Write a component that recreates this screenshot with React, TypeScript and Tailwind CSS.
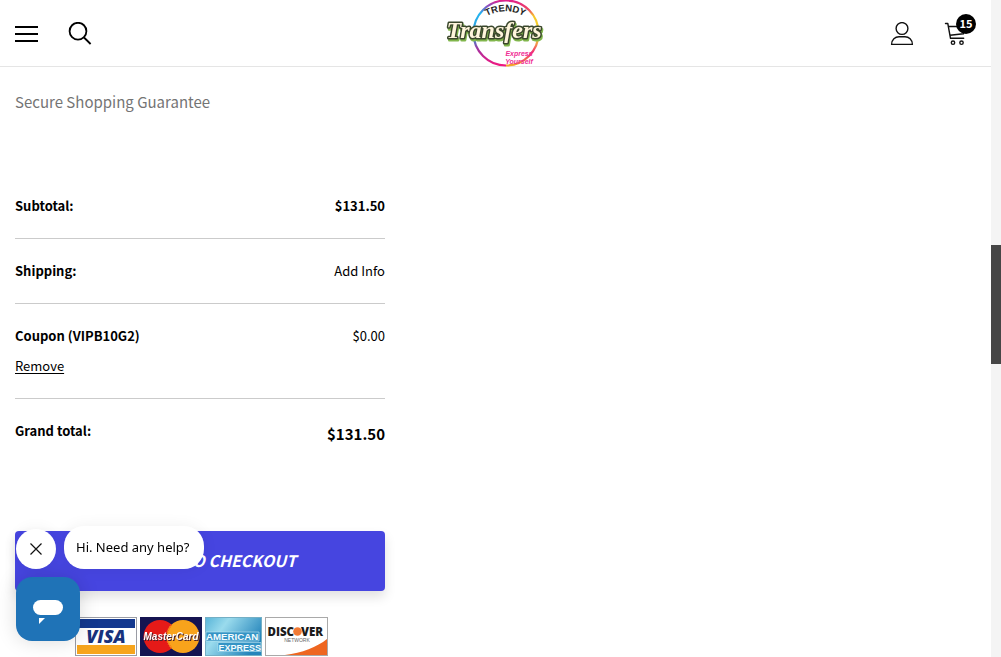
import type { ReactNode } from "react";

function SearchIcon() {
  return (
    <svg viewBox="0 0 24 24" className="size-6" fill="none" stroke="#000" strokeWidth="1.8" aria-hidden="true">
      <circle cx="10" cy="9.2" r="8.4" />
      <path d="M16 15.500 22.600 22" />
    </svg>
  );
}

function AccountIcon() {
  return (
    <svg viewBox="0 0 24 24" className="size-6" fill="none" stroke="#111" strokeWidth="1.400" strokeLinejoin="round" aria-hidden="true">
      <circle cx="12" cy="6.500" r="5.900" />
      <path d="M1.600 22.400c0-5 3.600-7.700 7.400-7.700h6c3.800 0 7.400 2.700 7.400 7.700z" />
    </svg>
  );
}

function CartIcon() {
  return (
    <svg viewBox="0 0 24 24" className="size-6" fill="none" stroke="#111" strokeWidth="1.400" strokeLinecap="round" strokeLinejoin="round" aria-hidden="true">
      <path d="M1.500 1.500h2.300l2.700 14.800h13.200M4.700 4.500h16.300l-1.500 7.300-13.500 1.400" />
      <circle cx="9" cy="20.700" r="1.700" />
      <circle cx="17.500" cy="20.700" r="1.700" />
    </svg>
  );
}

function Logo() {
  return (
    <svg viewBox="0 0 100 67" className="block h-[67px] w-[100px]" role="img" aria-label="Trendy Transfers Express Yourself">
      <defs>
        <linearGradient id="leftArc" x1="0" y1="0" x2="0" y2="1">
          <stop offset="0" stopColor="#e0218a" />
          <stop offset="0.08" stopColor="#8a4fc0" />
          <stop offset="0.2" stopColor="#22b5f0" />
          <stop offset="0.58" stopColor="#3990d4" />
          <stop offset="0.75" stopColor="#a532a0" />
          <stop offset="1" stopColor="#f01880" />
        </linearGradient>
        <linearGradient id="rightArc" x1="0" y1="0" x2="0" y2="1">
          <stop offset="0" stopColor="#e0218a" />
          <stop offset="0.14" stopColor="#ef4a60" />
          <stop offset="0.24" stopColor="#f6c82c" />
          <stop offset="0.58" stopColor="#f6da2c" />
          <stop offset="0.8" stopColor="#ef2b78" />
          <stop offset="1" stopColor="#f4a52a" />
        </linearGradient>
        <path id="logoCurve" d="M38 18.500Q60.500 4 83 18.500" />
      </defs>
      <path d="M61 .5A32.500 32.500 0 0 0 61 65.500" fill="none" stroke="url(#leftArc)" strokeWidth="2.200" />
      <path d="M61 .5A32.500 32.500 0 0 1 61 65.500" fill="none" stroke="url(#rightArc)" strokeWidth="2.200" />
      <text fontFamily="Liberation Sans, sans-serif" fontSize="9.500" fontWeight="700" fill="#252525" textAnchor="middle">
        <textPath href="#logoCurve" startOffset="50%">TRENDY</textPath>
      </text>
      <g fontFamily="Liberation Serif, serif" fontStyle="italic" fontWeight="700" fill="#fff5dc" stroke="#3a472c" strokeWidth="3" strokeLinejoin="round" className="drop-shadow-[1px_2px_0_#81b64c]">
        <text x="49" y="38" fontSize="24" textAnchor="middle" paintOrder="stroke">
          Transfers
        </text>
      </g>
      <g fontFamily="Liberation Sans, sans-serif" fontSize="7" fontStyle="italic" fontWeight="700" fill="#f02d94" textAnchor="middle">
        <text x="74" y="56">Express</text>
        <text x="74" y="64">Yourself</text>
      </g>
    </svg>
  );
}

function VisaCard() {
  return (
    <svg viewBox="0 0 62 40" className="h-10 w-[62px]" role="img" aria-label="Visa">
      <rect x=".5" y=".5" width="61" height="38" fill="#fff" stroke="#9a9ca5" />
      <path d="M2 2h58v9H2z" fill="#13388f" />
      <path d="M2 28h58v9H2z" fill="#f7a51d" />
      <text x="31" y="26" textAnchor="middle" fontFamily="Open Sans, sans-serif" fontSize="18" fontStyle="italic" fontWeight="800" fill="#18327d">VISA</text>
    </svg>
  );
}

function MasterCard() {
  return (
    <svg viewBox="0 0 62 40" className="h-10 w-[62px]" role="img" aria-label="MasterCard">
      <path d="M0 0h62v39H0z" fill="#151451" />
      <circle cx="20" cy="19.500" r="16.500" fill="#e51a18" />
      <circle cx="43" cy="19.500" r="16.500" fill="#f8a31b" />
      <path d="M31.500 8a16.500 16.500 0 0 0 0 23" fill="none" stroke="#f36b17" strokeWidth="2" strokeDasharray="1 1" />
      <text x="31" y="23" fontFamily="Liberation Sans, sans-serif" fontSize="10" fontStyle="italic" fontWeight="700" textAnchor="middle" fill="#fff" className="drop-shadow-[1px_1px_0_#46202a]">MasterCard</text>
    </svg>
  );
}

function AmexCard() {
  return (
    <svg viewBox="0 0 57 40" className="h-10 w-[57px]" role="img" aria-label="American Express">
      <defs>
        <linearGradient id="amexBlue" x1="0" y1="0" x2="1" y2=".5">
          <stop offset="0" stopColor="#58b4d8" />
          <stop offset=".35" stopColor="#9adbed" />
          <stop offset="1" stopColor="#2585bb" />
        </linearGradient>
      </defs>
      <rect x=".5" y=".5" width="56" height="38" fill="url(#amexBlue)" stroke="#74afc5" />
      <path d="M1 15h53v9H1zM13 25.500h43v9H13z" fill="#3494c5" stroke="#c2e8f3" strokeWidth=".6" />
      <g fontFamily="Liberation Sans, sans-serif" fontWeight="700" fill="#f3fcff">
        <text x="1" y="23" fontSize="9.700">AMERICAN</text>
        <text x="13.500" y="33.500" fontSize="9">EXPRESS</text>
      </g>
    </svg>
  );
}

function DiscoverCard() {
  return (
    <svg viewBox="0 0 63 40" className="h-10 w-[63px]" role="img" aria-label="Discover Network">
      <rect x=".5" y=".5" width="62" height="38" fill="#fff" stroke="#a9a9a9" />
      <path d="M62 22v16H20C37 36 52 30 62 22z" fill="#ee6620" />
      <circle cx="32.500" cy="14.500" r="4.300" fill="#f17a35" />
      <g fontFamily="Open Sans, sans-serif" fontSize="11.500" fontWeight="800" fill="#1b1b1b">
        <text x="29" y="18.500" textAnchor="end">DISC</text>
        <text x="36" y="18.500">VER</text>
      </g>
      <text x="32" y="25" textAnchor="middle" fontFamily="Liberation Sans, sans-serif" fontSize="5" fill="#666">NETWORK</text>
    </svg>
  );
}

function TotalRow({ label, children, last = false }: { label: ReactNode; children: ReactNode; last?: boolean }) {
  return (
    <div className={last ? "flex justify-between py-[17px]" : "flex justify-between border-b border-[#cbcbcb] py-[17px]"}>
      <dt className="font-bold">{label}</dt>
      {children}
    </div>
  );
}

export default function App() {
  return (
    <div className="flex min-h-screen bg-white font-['Noto_Sans_CJK_SC',sans-serif] text-[13px] text-black">
      <div className="flex min-w-0 flex-1 flex-col">
        <header className="grid h-[67px] grid-cols-3 items-center border-b border-[#e5e5e5] px-[15px]">
          <div className="flex items-center gap-[30px]">
            <button aria-label="Menu" className="flex w-[23px] flex-col gap-[5px]">
              <span className="h-0.5 w-full bg-black" />
              <span className="h-0.5 w-full bg-black" />
              <span className="h-0.5 w-full bg-black" />
            </button>
            <button aria-label="Search"><SearchIcon /></button>
          </div>
          <a href="#home" className="justify-self-center"><Logo /></a>
          <div className="flex items-center justify-end gap-[30px] pr-2">
            <a href="#account" aria-label="Account"><AccountIcon /></a>
            <a href="#cart" aria-label="Cart, 15 items" className="relative">
              <CartIcon />
              <span className="absolute -top-2 left-3 flex size-5 items-center justify-center rounded-full bg-black text-[11px] font-bold text-white">15</span>
            </a>
          </div>
        </header>

        <main className="w-full max-w-[400px] px-[15px] pt-[23px]">
          <p className="text-[15px] leading-6 text-[#747474]">Secure Shopping Guarantee</p>

          <dl className="mt-[60px] leading-[30px]">
            <TotalRow label="Subtotal:"><dd className="font-bold">$131.50</dd></TotalRow>
            <TotalRow label="Shipping:">
              <dd><button>Add Info</button></dd>
            </TotalRow>
            <TotalRow label={<>Coupon (VIPB10G2)<a href="#remove" className="block font-normal underline underline-offset-2">Remove</a></>}>
              <dd>$0.00</dd>
            </TotalRow>
            <TotalRow label="Grand total:" last>
              <dd className="text-[15px] leading-9 font-bold">$131.50</dd>
            </TotalRow>
          </dl>

          <button className="mt-[62px] h-[60px] w-full rounded bg-[#4645e0] pb-0.5 text-base font-bold text-white italic shadow-[0_6px_12px_rgba(0,0,0,0.12)]">
            PROCEED TO CHECKOUT
          </button>

          <div className="mt-[26px] flex justify-center gap-[3px] pl-0.5">
            <VisaCard />
            <MasterCard />
            <AmexCard />
            <DiscoverCard />
          </div>
        </main>
      </div>

      <div className="w-2.5 shrink-0 bg-[#f4f4f4] pt-[245px]" aria-hidden="true">
        <div className="h-[119px] bg-[#464646]" />
      </div>

      <section aria-label="Chat" className="fixed bottom-4 left-4 font-['Noto_Sans',sans-serif]">
        <div className="mb-2 flex items-end gap-2">
          <button aria-label="Close chat message" className="flex size-10 items-center justify-center rounded-full bg-white shadow-[0_0_16px_rgba(0,0,0,0.06)]">
            <svg viewBox="0 0 12 12" className="size-3" stroke="#111" strokeWidth="1.200" aria-hidden="true">
              <path d="m.5.5 11 11M11.500.5l-11 11" />
            </svg>
          </button>
          <button className="h-[43px] min-w-[140px] rounded-[20px] bg-white px-3 text-left shadow-[0_0_16px_rgba(0,0,0,0.06)]">Hi. Need any help?</button>
        </div>
        <button aria-label="Open chat" className="flex size-16 items-center justify-center rounded-2xl bg-[#1f73b7] shadow-[0_0_20px_rgba(0,0,0,0.15)]">
          <svg viewBox="0 0 32 32" className="size-8" fill="#fff" aria-hidden="true">
            <rect x="1" y="7" width="30" height="15" rx="7.500" />
            <path d="M7 25h6l-6 6z" />
          </svg>
        </button>
      </section>
    </div>
  );
}
